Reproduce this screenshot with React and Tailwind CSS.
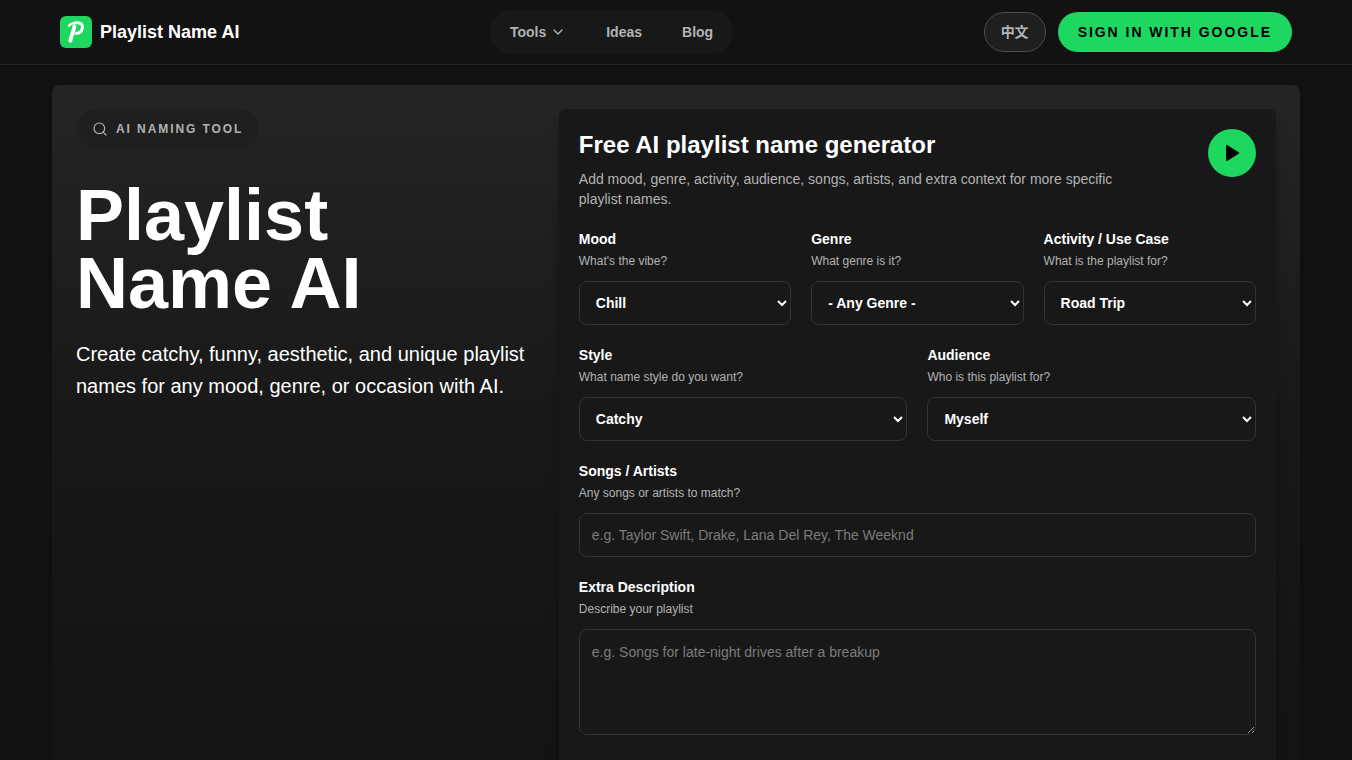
import { ChevronDown, Search } from "lucide-react";

function Logo() {
  return (
    <svg viewBox="0 0 32 32" className="size-8" aria-hidden="true">
      <rect width="32" height="32" rx="6" fill="#1ed760" />
      <g fill="none" stroke="#fff" strokeLinecap="round" strokeLinejoin="round">
        <path d="M9 9.8C10.8 7.6 13.6 6.6 17 6.6" strokeWidth="2.4" />
        <path d="M16.5 6.7C20.8 6.5 23 8.4 22.4 11.8C21.8 15.2 19.2 17.4 16 17.4" strokeWidth="3" />
        <path d="M14.4 10.2C13.9 15.2 11 19.6 10.4 24.8" strokeWidth="3.8" />
      </g>
    </svg>
  );
}

function Field({ id, label, hint, children }) {
  return (
    <div className="flex min-w-0 flex-col">
      <label htmlFor={id} className="text-sm leading-5 font-bold text-white">
        {label}
      </label>
      <p id={`${id}-hint`} className="mt-1 mb-3 text-xs text-[#b3b3b3]">
        {hint}
      </p>
      {children}
    </div>
  );
}

function SelectField({ id, label, hint, options }) {
  return (
    <Field id={id} label={label} hint={hint}>
      <select
        id={id}
        aria-describedby={`${id}-hint`}
        className="h-11 w-full rounded-lg border border-[#333333] bg-[#181818] px-3 text-sm font-bold text-white"
      >
        {options.map((option) => (
          <option key={option}>{option}</option>
        ))}
      </select>
    </Field>
  );
}

function Header() {
  return (
    <header className="border-b border-[#242424] bg-[#121212]">
      <div className="mx-auto flex h-16 w-full max-w-7xl items-center justify-between px-6">
        <a href="#" className="flex items-center gap-2 text-lg font-bold text-white">
          <Logo />
          Playlist Name AI
        </a>
        <nav className="flex h-11 items-center gap-2 rounded-full bg-[#181818] p-1 text-sm font-bold text-[#b3b3b3]">
          <button type="button" className="flex items-center gap-1 px-4 py-2">
            Tools
            <ChevronDown className="size-4" />
          </button>
          <a href="#ideas" className="px-4 py-2">Ideas</a>
          <a href="#blog" className="px-4 py-2">Blog</a>
        </nav>
        <div className="flex items-center gap-3">
          <button
            type="button"
            className="h-10 rounded-full border border-[#4d4d4d] bg-[#1f1f1f] px-4 text-sm font-bold text-[#b3b3b3]"
          >
            中文
          </button>
          <button
            type="button"
            className="h-10 rounded-full bg-[#1ed760] px-5 text-sm font-bold tracking-[0.14em] whitespace-nowrap text-black uppercase"
          >
            Sign in with Google
          </button>
        </div>
      </div>
    </header>
  );
}

function GeneratorForm() {
  return (
    <form className="flex flex-col gap-5 rounded-t-lg bg-[#181818] p-5 shadow-[0_8px_8px_rgba(0,0,0,0.3)]">
      <div className="flex items-start justify-between gap-4">
        <div className="max-w-xl">
          <h2 className="text-2xl font-bold text-white">Free AI playlist name generator</h2>
          <p className="mt-2 text-sm leading-5 text-[#b3b3b3]">
            Add mood, genre, activity, audience, songs, artists, and extra context for more specific
            playlist names.
          </p>
        </div>
        <button
          type="button"
          aria-label="Generate names"
          className="flex size-12 shrink-0 items-center justify-center rounded-full bg-[#1ed760] text-black"
        >
          <svg viewBox="0 0 20 20" className="size-5" aria-hidden="true">
            <path d="M4.8 2.6v14.8L16.6 10z" fill="currentColor" stroke="currentColor" strokeWidth="1.4" strokeLinejoin="round" />
          </svg>
        </button>
      </div>

      <div className="grid grid-cols-3 gap-5">
        <SelectField id="mood" label="Mood" hint="What's the vibe?" options={["Chill"]} />
        <SelectField id="genre" label="Genre" hint="What genre is it?" options={["- Any Genre -"]} />
        <SelectField id="activity" label="Activity / Use Case" hint="What is the playlist for?" options={["Road Trip"]} />
      </div>

      <div className="grid grid-cols-2 gap-5">
        <SelectField id="style" label="Style" hint="What name style do you want?" options={["Catchy"]} />
        <SelectField id="audience" label="Audience" hint="Who is this playlist for?" options={["Myself"]} />
      </div>

      <Field id="songs" label="Songs / Artists" hint="Any songs or artists to match?">
        <input
          id="songs"
          type="text"
          aria-describedby="songs-hint"
          placeholder="e.g. Taylor Swift, Drake, Lana Del Rey, The Weeknd"
          className="h-11 w-full rounded-lg border border-[#333333] bg-[#181818] px-3 text-sm text-white placeholder:text-[#7c7c7c]"
        />
      </Field>

      <Field id="description" label="Extra Description" hint="Describe your playlist">
        <textarea
          id="description"
          rows={4}
          aria-describedby="description-hint"
          placeholder="e.g. Songs for late-night drives after a breakup"
          className="w-full resize-y rounded-lg border border-[#333333] bg-[#181818] p-3 text-sm leading-5 text-white placeholder:text-[#7c7c7c]"
        />
      </Field>
    </form>
  );
}

export default function App() {
  return (
    <div className="flex min-h-screen flex-col bg-[#121212] font-['Liberation_Sans','Noto_Sans_CJK_SC',sans-serif]">
      <Header />
      <main className="mx-auto flex w-full max-w-7xl flex-1 flex-col px-4 pt-5">
        <section className="grid flex-1 grid-cols-[22fr_35fr] gap-8 rounded-t-lg bg-linear-to-b from-[#252525] via-[#181818] to-[#131313] px-6 pt-6 shadow-[0_8px_8px_rgba(0,0,0,0.3)]">
          <div className="min-w-0">
            <p className="inline-flex h-10 items-center gap-2 rounded-full bg-[#1f1f1f] px-4 text-xs font-bold tracking-[0.16em] text-[#b3b3b3] uppercase">
              <Search className="size-4" strokeWidth={1.75} />
              AI naming tool
            </p>
            <h1 className="mt-8 text-7xl leading-[0.95] font-bold text-white">Playlist Name AI</h1>
            <p className="mt-5 text-xl leading-8 text-white">
              Create catchy, funny, aesthetic, and unique playlist names for any mood, genre, or
              occasion with AI.
            </p>
          </div>
          <GeneratorForm />
        </section>
      </main>
    </div>
  );
}
